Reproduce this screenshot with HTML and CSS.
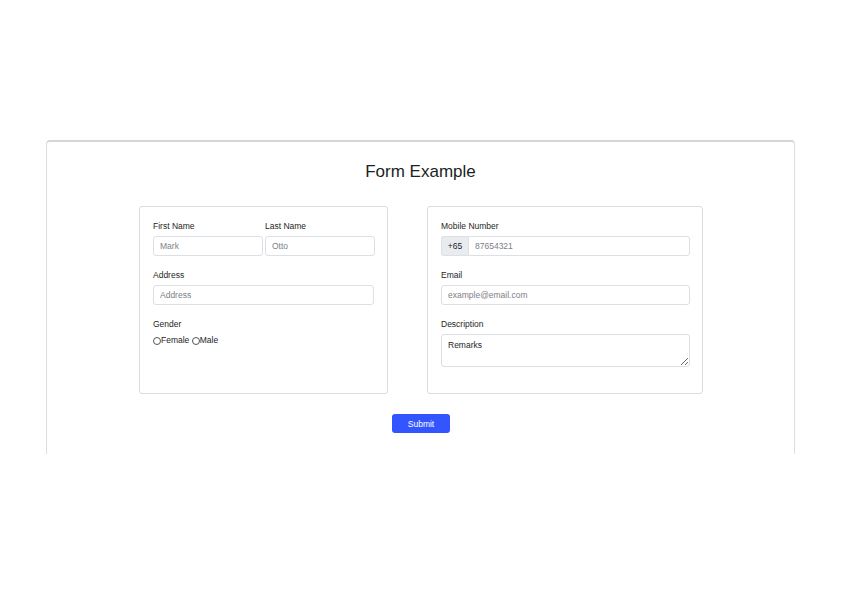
FILE: index.html
```html
<!DOCTYPE html>
<html lang="en">
<head>
<meta charset="utf-8">
<title>Form Example</title>
<link rel="stylesheet" href="styles.css">
</head>
<body>
<div class="page">
  <div class="panel">
    <h1 class="title">Form Example</h1>
    <form class="form">
      <div class="cards">
        <div class="card card-left">
          <div class="name-row">
            <div class="field">
              <label class="label">First Name</label>
              <input class="input" type="text" placeholder="Mark">
            </div>
            <div class="field">
              <label class="label">Last Name</label>
              <input class="input" type="text" placeholder="Otto">
            </div>
          </div>
          <div class="field">
            <label class="label">Address</label>
            <input class="input" type="text" placeholder="Address">
          </div>
          <div class="field">
            <label class="label">Gender</label>
            <div class="radios"><label class="radio"><input type="radio" name="g" class="radio-input">Female</label> <label class="radio"><input type="radio" name="g" class="radio-input">Male</label></div>
          </div>
        </div>
        <div class="card card-right">
          <div class="field">
            <label class="label">Mobile Number</label>
            <div class="group">
              <span class="prefix">+65</span>
              <input class="input group-input" type="text" placeholder="87654321">
            </div>
          </div>
          <div class="field">
            <label class="label">Email</label>
            <input class="input" type="email" placeholder="example@email.com">
          </div>
          <div class="field">
            <label class="label">Description</label>
            <textarea class="textarea">Remarks</textarea>
          </div>
        </div>
      </div>
      <div class="actions">
        <button class="submit" type="button">Submit</button>
      </div>
    </form>
  </div>
</div>
</body>
</html>
```
FILE: styles.css
```css
* { box-sizing: border-box; }
html, body { margin: 0; padding: 0; background: #fff; }
body {
  font-family: "Liberation Sans", Arial, Helvetica, sans-serif;
  color: #212529;
  font-size: 8.5px;
}
.page {
  padding: 140px 46px 0;
}
.panel {
  border-top: 2px solid #d6d6d6;
  border-left: 1px solid #dedede;
  border-right: 1px solid #dedede;
  border-radius: 4px 4px 0 0;
  padding: 20px 0 21px;
}
.title {
  margin: 0 0 24px;
  text-align: center;
  font-size: 17px;
  line-height: 20px;
  font-weight: 400;
  color: #1d1f22;
}
.cards {
  display: flex;
  justify-content: center;
  gap: 39px;
  padding-left: 1px;
}
.card {
  border: 1px solid #dcdcdc;
  border-radius: 3px;
  padding: 14px 13px 26px 13px;
}
.card-left { width: 249px; }
.card-right { width: 276px; padding-right: 12px; }
.name-row {
  display: grid;
  grid-template-columns: 110px 110px;
  column-gap: 2px;
  width: 222px;
}
.field {
  display: flex;
  flex-direction: column;
  margin-bottom: 14px;
}
.card .field:last-child { margin-bottom: 0; }
.name-row .field { margin-bottom: 14px; }
.label {
  display: block;
  font-size: 8.5px;
  line-height: 10px;
  margin-bottom: 5px;
  color: #1d1f22;
}
.input, .textarea {
  font-family: "Liberation Sans", Arial, Helvetica, sans-serif;
  font-size: 8.5px;
  height: 20px;
  width: 100%;
  border: 1px solid #dcdfe3;
  border-radius: 3px;
  padding: 0 6px;
  color: #212529;
  background: #fff;
  outline: none;
  margin: 0;
}
.input::placeholder { color: #7b8187; }
.textarea {
  height: 33px;
  padding: 5px 6px;
  line-height: 10px;
  resize: vertical;
  display: block;
}
.group {
  display: flex;
  height: 20px;
}
.prefix {
  width: 27px;
  flex: none;
  display: flex;
  align-items: center;
  justify-content: center;
  background: #e9ecef;
  border: 1px solid #dcdfe3;
  border-right: none;
  border-radius: 3px 0 0 3px;
  color: #212529;
}
.group-input {
  flex: 1;
  border-radius: 0 3px 3px 0;
}
.radios {
  line-height: 11px;
  margin-top: 1px;
}
.radio {
  display: inline-flex;
  align-items: center;
}
.radio-input {
  appearance: none;
  -webkit-appearance: none;
  width: 8px;
  height: 8px;
  margin: 0;
  border: 1px solid #555;
  border-radius: 50%;
  background: #fff;
}
.actions {
  display: flex;
  justify-content: center;
  margin-top: 20px;
}
.submit {
  width: 58px;
  height: 19px;
  background: #3355ff;
  color: #fff;
  border: none;
  border-radius: 3px;
  font-family: "Liberation Sans", Arial, Helvetica, sans-serif;
  font-size: 8.5px;
  padding: 0;
  margin-left: 1px;
}
```
